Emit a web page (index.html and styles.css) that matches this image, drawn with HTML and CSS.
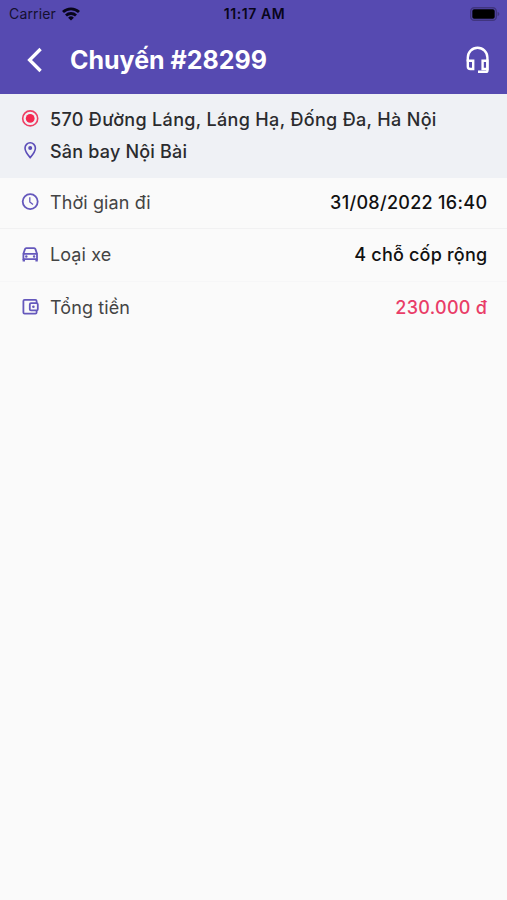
FILE: index.html
```html
<!DOCTYPE html>
<html lang="vi">
<head>
    <meta charset="UTF-8">
    <meta name="viewport" content="width=device-width, initial-scale=1.0">
    <title>Chuyến #28299</title>
    <link rel="stylesheet" href="styles.css">
</head>
<body>
    <header class="header">
        <div class="status-bar">
            <div class="carrier">
                <span>Carrier</span>
                <svg class="wifi" viewBox="0 0 18 14" fill="none" stroke="#08051a" stroke-width="2.8">
                    <path d="M1 5.1a11.4 11.4 0 0 1 16 0"/>
                    <path d="M4 8.5a7.2 7.2 0 0 1 10 0"/>
                    <path d="M9 13.6l-2.9-2.9a4.1 4.1 0 0 1 5.8 0z" fill="#08051a" stroke="none"/>
                </svg>
            </div>
            <span class="time">11:17 AM</span>
            <svg class="battery" viewBox="0 0 30 14">
                <rect x="0.7" y="0.7" width="25.6" height="12.6" rx="3.6" fill="none" stroke="#40357f" stroke-width="1.4"/>
                <rect x="2.3" y="2.3" width="22.4" height="9.4" rx="1.8" fill="#000"/>
                <path d="M27.6 4.8v4.4q1.8-.8 1.8-2.2t-1.8-2.2z" fill="#40357f"/>
            </svg>
        </div>
        <div class="nav-bar">
            <svg class="back" viewBox="0 0 16 26" fill="none" stroke="#fff" stroke-width="3.3">
                <path d="M14.600 2L3.600 13l11 11"/>
            </svg>
            <h1>Chuyến #28299</h1>
            <svg class="support" viewBox="0 0 24 28" fill="none" stroke="#fff" stroke-width="2.4">
                <path d="M7.200 14.800H1.800v5.600q0 2.600 2.600 2.600h2.800zM21.400 14.800h-4.800V23h4.800z"/>
                <path d="M1.800 15.500V11.600a9.800 9.800 0 0 1 19.600 0V24.400q0 1.400-1.400 1.400h-8"/>
            </svg>
        </div>
    </header>

    <section class="route">
        <div class="place">
            <svg class="icon" viewBox="0 0 18 18">
                <circle cx="9.200" cy="8.400" r="7.500" fill="none" stroke="#ee3f64" stroke-width="1.600"/>
                <circle cx="9.200" cy="8.400" r="4.400" fill="#f52850"/>
            </svg>
            <span class="from">570 Đường Láng, Láng Hạ, Đống Đa, Hà Nội</span>
        </div>
        <div class="place">
            <svg class="icon" viewBox="0 0 18 18">
                <path d="M9.200 .8a5.200 5.200 0 0 0-5.200 5.200C4 9.800 9.200 15.600 9.200 15.600s5.200-5.800 5.200-9.600A5.200 5.200 0 0 0 9.200 .8z" fill="none" stroke="#5b4db8" stroke-width="1.600"/>
                <circle cx="9.200" cy="6.100" r="2" fill="#5b4db8"/>
            </svg>
            <span>Sân bay Nội Bài</span>
        </div>
    </section>

    <section class="details">
        <div class="row">
            <svg class="icon" viewBox="0 0 18 18" fill="none" stroke="#6558bc" stroke-width="1.800">
                <circle cx="9.200" cy="8.600" r="7.500"/>
                <path d="M8.800 4.200v4.800l3.200 2.600" stroke-width="1.300"/>
            </svg>
            <span class="label">Thời gian đi</span>
            <span class="value">31/08/2022 16:40</span>
        </div>
        <div class="row">
            <svg class="icon" viewBox="0 0 18 18" fill="none" stroke="#6558bc" stroke-width="1.800">
                <path d="M2.400 7.800h13.600v5.400H2.400zM2.400 7.800l1.600-4.700q.3-.9 1.200-.9h8q.9 0 1.200.9l1.600 4.700"/>
                <path d="M2.800 13v2.600M15.600 13v2.600" stroke-width="2.400"/>
                <circle cx="5.300" cy="10.500" r="1.200" fill="#6558bc" stroke="none"/>
                <circle cx="13.100" cy="10.500" r="1.200" fill="#6558bc" stroke="none"/>
            </svg>
            <span class="label">Loại xe</span>
            <span class="value type">4 chỗ cốp rộng</span>
        </div>
        <div class="row">
            <svg class="icon" viewBox="0 0 18 18" fill="none" stroke="#6558bc" stroke-width="1.800">
                <path d="M15.600 4.200V2.100q0-1.200-1.200-1.200H3.600q-1.200 0-1.200 1.200v11.400q0 1.200 1.200 1.200h10.800q1.200 0 1.200-1.200v-2.100"/>
                <rect x="8.800" y="4.200" width="8" height="7.200" rx="1.200"/>
                <circle cx="12.400" cy="7.800" r="1.300" fill="#6558bc" stroke="none"/>
            </svg>
            <span class="label">Tổng tiền</span>
            <span class="value price">230.000 đ</span>
        </div>
    </section>
</body>
</html>
```

FILE: styles.css
```css
* {
    box-sizing: border-box;
}
body {
    margin: 0;
    min-height: 100vh;
    background-color: #fafafa;
    font-family: Inter, "Liberation Sans", sans-serif;
    color: #2b2b2e;
}
svg {
    display: block;
    flex: none;
}
.header {
    height: 94px;
    background-color: #564ab1;
}
.status-bar {
    display: grid;
    grid-template-columns: 1fr auto 1fr;
    align-items: center;
    height: 27px;
    padding: 0 7px 0 9px;
    color: #15102f;
    font-size: 14px;
}
.carrier {
    display: flex;
    align-items: center;
    gap: 6px;
    letter-spacing: 0.15px;
}
.wifi {
    width: 18px;
    height: 14px;
}
.time {
    color: #08051a;
    font-weight: 600;
    letter-spacing: 0.6px;
}
.battery {
    width: 30px;
    height: 14px;
    justify-self: end;
}
.nav-bar {
    display: flex;
    align-items: center;
    height: 65px;
    padding: 0 17px 0 26px;
}
.back {
    width: 16px;
    height: 26px;
    margin-right: 28px;
}
h1 {
    flex: 1;
    margin: 0;
    font-size: 25px;
    font-weight: 700;
    color: #fff;
}
.support {
    width: 24px;
    height: 28px;
}
.route {
    height: 84px;
    padding: 9px 20px 0 21px;
    background-color: #eff1f5;
}
.place {
    display: flex;
    align-items: center;
    gap: 11px;
    height: 32px;
    font-size: 18px;
    font-weight: 500;
    letter-spacing: 0.2px;
}
.from {
    letter-spacing: 0.33px;
}
.icon {
    width: 18px;
    height: 18px;
    overflow: visible;
}
.row {
    display: flex;
    align-items: center;
    gap: 11px;
    height: 52.5px;
    padding: 0 20px 0 21px;
    border-bottom: 1px solid #f6f6f7;
    font-size: 18px;
}
.row:first-child {
    height: 51px;
    padding-bottom: 2px;
    border-bottom-color: #f1f1f2;
}
.row:last-child {
    border-bottom: none;
}
.label {
    flex: 1;
    color: #444;
    letter-spacing: 0.1px;
}
.value {
    font-weight: 500;
    letter-spacing: 0.3px;
    margin-right: -0.3px;
    color: #111;
}
.type {
    letter-spacing: 0.2px;
}
.price {
    color: #e93d68;
}
```
